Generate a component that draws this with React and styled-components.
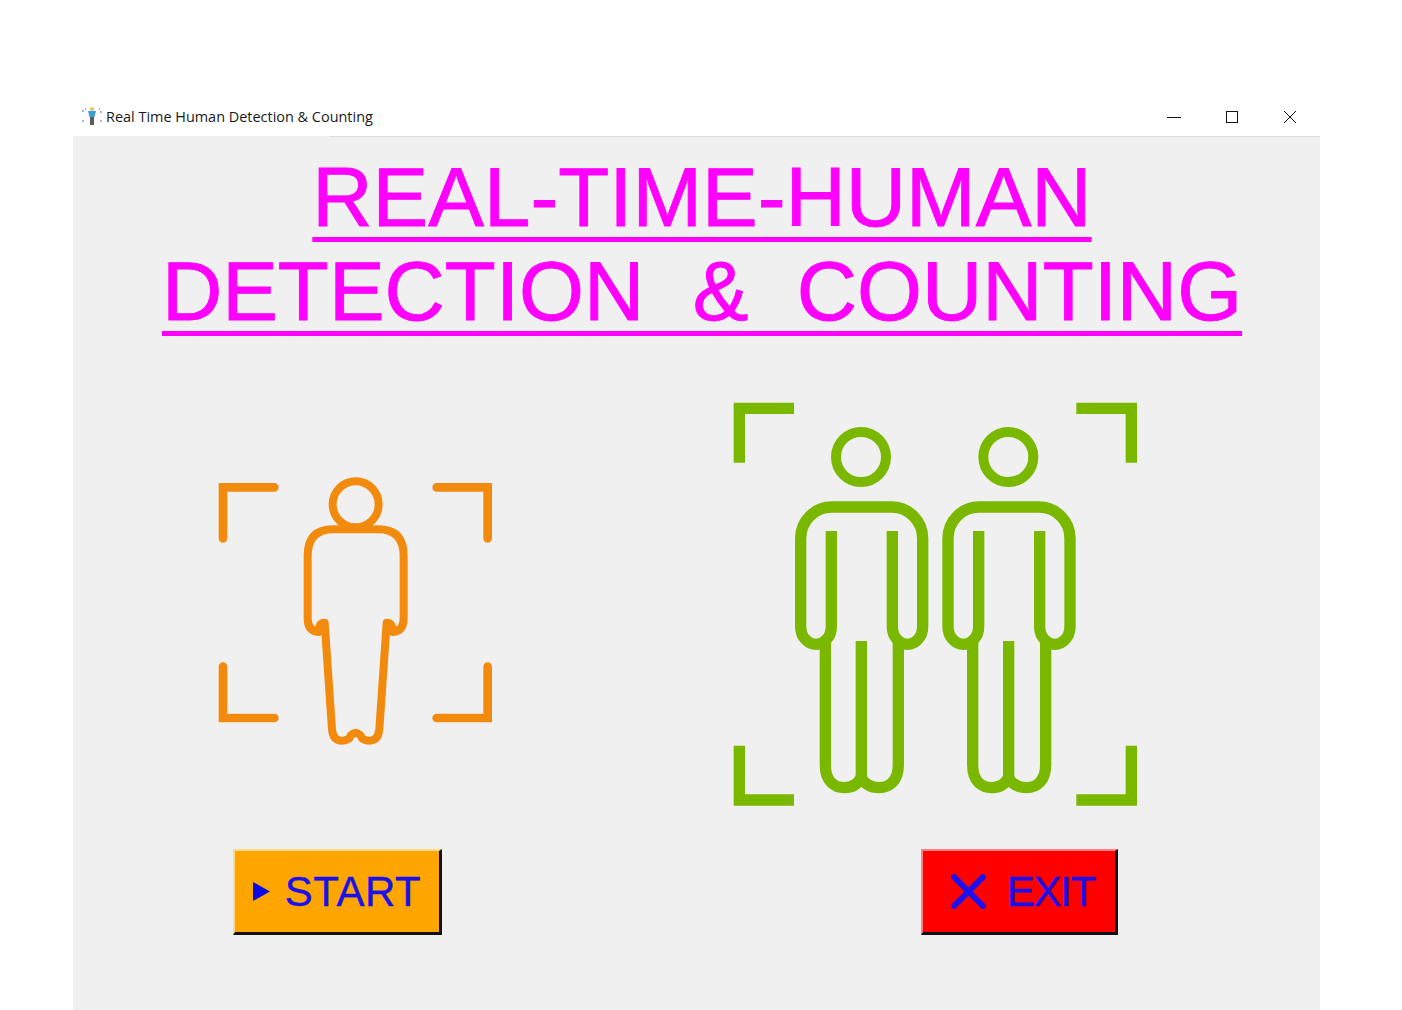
import React from 'react';
import styled, { createGlobalStyle } from 'styled-components';

const GlobalStyle = createGlobalStyle`
  html, body {
    margin: 0;
    padding: 0;
    background: #fff;
  }
`;

function AppIcon() {
  return (
    <svg width="20" height="20" viewBox="0 0 20 20">
      <path d="M1 4V6M1 14V16M3 3H4M17 3H18M19 5V7M19 14V16" stroke="#7f9cb5" strokeWidth="1.4" fill="none" />
      <circle cx="10" cy="3" r="2" fill="#e8c36a" />
      <path d="M6 5H14L12.5 11H7.5Z" fill="#3ba0d8" />
      <rect x="8" y="11" width="4" height="8" fill="#5c5c5c" />
    </svg>
  );
}

function SingleFigure() {
  return (
    <svg width="290" height="285" viewBox="0 0 870 855" fill="none" stroke="#f28a0e">
      <g strokeWidth="26" strokeLinecap="round" strokeLinejoin="miter">
        <path d="M39 205V52H193" />
        <path d="M680 52H833V205" />
        <path d="M39 590V744H193" />
        <path d="M680 744H833V590" />
      </g>
      <circle cx="437" cy="103" r="69" strokeWidth="24" />
      <path
        strokeWidth="24"
        strokeLinejoin="round"
        d="M437 178H505Q581 178 581 258V445Q581 484 548 486Q548 458 530 458L508 778Q505 812 478 812Q455 812 452 796Q437 782 422 796Q419 812 396 812Q369 812 366 778L344 458Q326 458 326 486Q293 484 293 445V258Q293 178 369 178Z"
      />
      {/* thick join where hand meets leg */}
      <path strokeWidth="20" strokeLinecap="round" d="M312 480Q335 478 342 462M562 480Q539 478 532 462" />
    </svg>
  );
}

function Figure({ x }) {
  return (
    <g transform={`translate(${x} 0)`} strokeWidth="34" strokeLinejoin="round">
      <circle cx="408" cy="186" r="75" strokeWidth="30" />
      <path d="M319 408V695A46 53 0 0 1 227 695V430A93 94 0 0 1 320 336H500A93 94 0 0 1 593 430V695A45.5 53 0 0 1 502 695V408" />
      <path d="M301 730V1110C301 1160 330 1178 358 1178C385 1178 400 1165 408 1148C418 1165 435 1178 462 1178C495 1178 520 1155 520 1110V730" />
      <path d="M409 738V1150" />
    </g>
  );
}

function GroupFigure() {
  return (
    <svg width="420" height="420" viewBox="0 0 1260 1260" fill="none" stroke="#7ab800">
      <g strokeWidth="34">
        <path d="M43 203V40H207" />
        <path d="M1054 40H1219V203" />
        <path d="M43 1052V1215H207" />
        <path d="M1054 1215H1219V1052" />
      </g>
      <Figure x={0} />
      <Figure x={442} />
    </svg>
  );
}

function PlayGlyph() {
  return (
    <svg width="17" height="19" viewBox="0 0 17 19">
      <path d="M0 0L17 9.5L0 19Z" fill="#0a0ae6" />
    </svg>
  );
}

function CrossGlyph() {
  return (
    <svg width="35" height="35" viewBox="0 0 35 35">
      <path d="M3 3L32 32M32 3L3 32" stroke="#1a10f0" strokeWidth="6" strokeLinecap="round" />
    </svg>
  );
}

export default function App() {
  return (
    <>
      <GlobalStyle />
      <Page>
        <Window>
          <TitleBar>
            <AppIcon />
            <TitleText>Real Time Human Detection &amp; Counting</TitleText>
            <Controls>
              <Control>
                <svg width="14" height="14" viewBox="0 0 14 14"><path d="M0 7.5H14" stroke="#111" /></svg>
              </Control>
              <Control>
                <svg width="14" height="14" viewBox="0 0 14 14"><rect x="1.5" y="1.5" width="11" height="11" fill="none" stroke="#111" /></svg>
              </Control>
              <Control>
                <svg width="14" height="14" viewBox="0 0 14 14"><path d="M1 1L13 13M13 1L1 13" stroke="#111" /></svg>
              </Control>
            </Controls>
          </TitleBar>
          <Content>
            <Heading>
              <HeadingLine>REAL-TIME-HUMAN</HeadingLine>
              <HeadingLine>{'DETECTION  &  COUNTING'}</HeadingLine>
            </Heading>
            <Figures>
              <FigureSlot $left={137} $bottom={60}><SingleFigure /></FigureSlot>
              <FigureSlot $left={225} $bottom={0}><GroupFigure /></FigureSlot>
            </Figures>
            <Buttons>
              <ActionButton $bg="#ffa500" $light="#ffd98a" $left={160} $width={209} $gap={15} $track={0.5} $pad={0}>
                <PlayGlyph />
                START
              </ActionButton>
              <ActionButton $bg="#ff0000" $light="#ff8080" $left={479} $width={197} $gap={21} $track={-1.2} $pad={8}>
                <CrossGlyph />
                EXIT
              </ActionButton>
            </Buttons>
          </Content>
        </Window>
      </Page>
    </>
  );
}

const Page = styled.div`
  height: 1010px;
  padding: 96px 82px 0 73px;
  box-sizing: border-box;
  overflow: hidden;
`;

const Window = styled.div`
  display: flex;
  flex-direction: column;
  height: 100%;
`;

const TitleBar = styled.div`
  display: flex;
  align-items: center;
  height: 40px;
  padding: 0 0 0 9px;
  box-sizing: border-box;
  background: #fff;
`;

const TitleText = styled.span`
  margin-left: 4px;
  font-family: "Open Sans", "Liberation Sans", sans-serif;
  font-size: 14.45px;
  color: #1a1a1a;
`;

const Controls = styled.div`
  display: flex;
  margin: 1px 1px 0 auto;
`;

const Control = styled.div`
  display: flex;
  align-items: center;
  justify-content: center;
  width: 58px;
  height: 40px;
`;

const Content = styled.div`
  flex: 1;
  background: #f0f0f0;
  border-top: 1px solid;
  border-image: linear-gradient(to right, #f0f0f0 257px, #dcdcdc 257px) 1;
`;

const Heading = styled.h1`
  margin: 0;
  padding: 13px 0 0 11px;
  text-align: center;
  font-family: "Liberation Sans", Arial, sans-serif;
  font-size: 83.5px;
  font-weight: 400;
  line-height: 94px;
  color: #ff00ff;
  -webkit-text-stroke: 0.9px #ff00ff;
`;

const HeadingLine = styled.div`
  white-space: pre;
  word-spacing: 1px;
  text-decoration: underline;
  text-decoration-thickness: 5px;
  text-underline-offset: 11px;
  text-decoration-skip-ink: none;
`;

const Figures = styled.div`
  display: flex;
  align-items: flex-end;
  margin-top: 57px;
`;

const FigureSlot = styled.div`
  display: flex;
  margin-left: ${(p) => p.$left}px;
  margin-bottom: ${(p) => p.$bottom}px;
`;

const Buttons = styled.div`
  display: flex;
  margin-top: 34px;
`;

const ActionButton = styled.div`
  display: flex;
  align-items: center;
  justify-content: center;
  gap: ${(p) => p.$gap}px;
  width: ${(p) => p.$width}px;
  height: 86px;
  margin-left: ${(p) => p.$left}px;
  padding-left: ${(p) => p.$pad}px;
  box-sizing: border-box;
  background: ${(p) => p.$bg};
  border-style: solid;
  border-width: 2px 3px 3px 2px;
  border-color: ${(p) => p.$light} #111 #111 ${(p) => p.$light};
  font-family: "Liberation Sans", Arial, sans-serif;
  font-size: 42px;
  letter-spacing: ${(p) => p.$track}px;
  color: #1a10e8;
  -webkit-text-stroke: 0.4px #1a10e8;
`;
